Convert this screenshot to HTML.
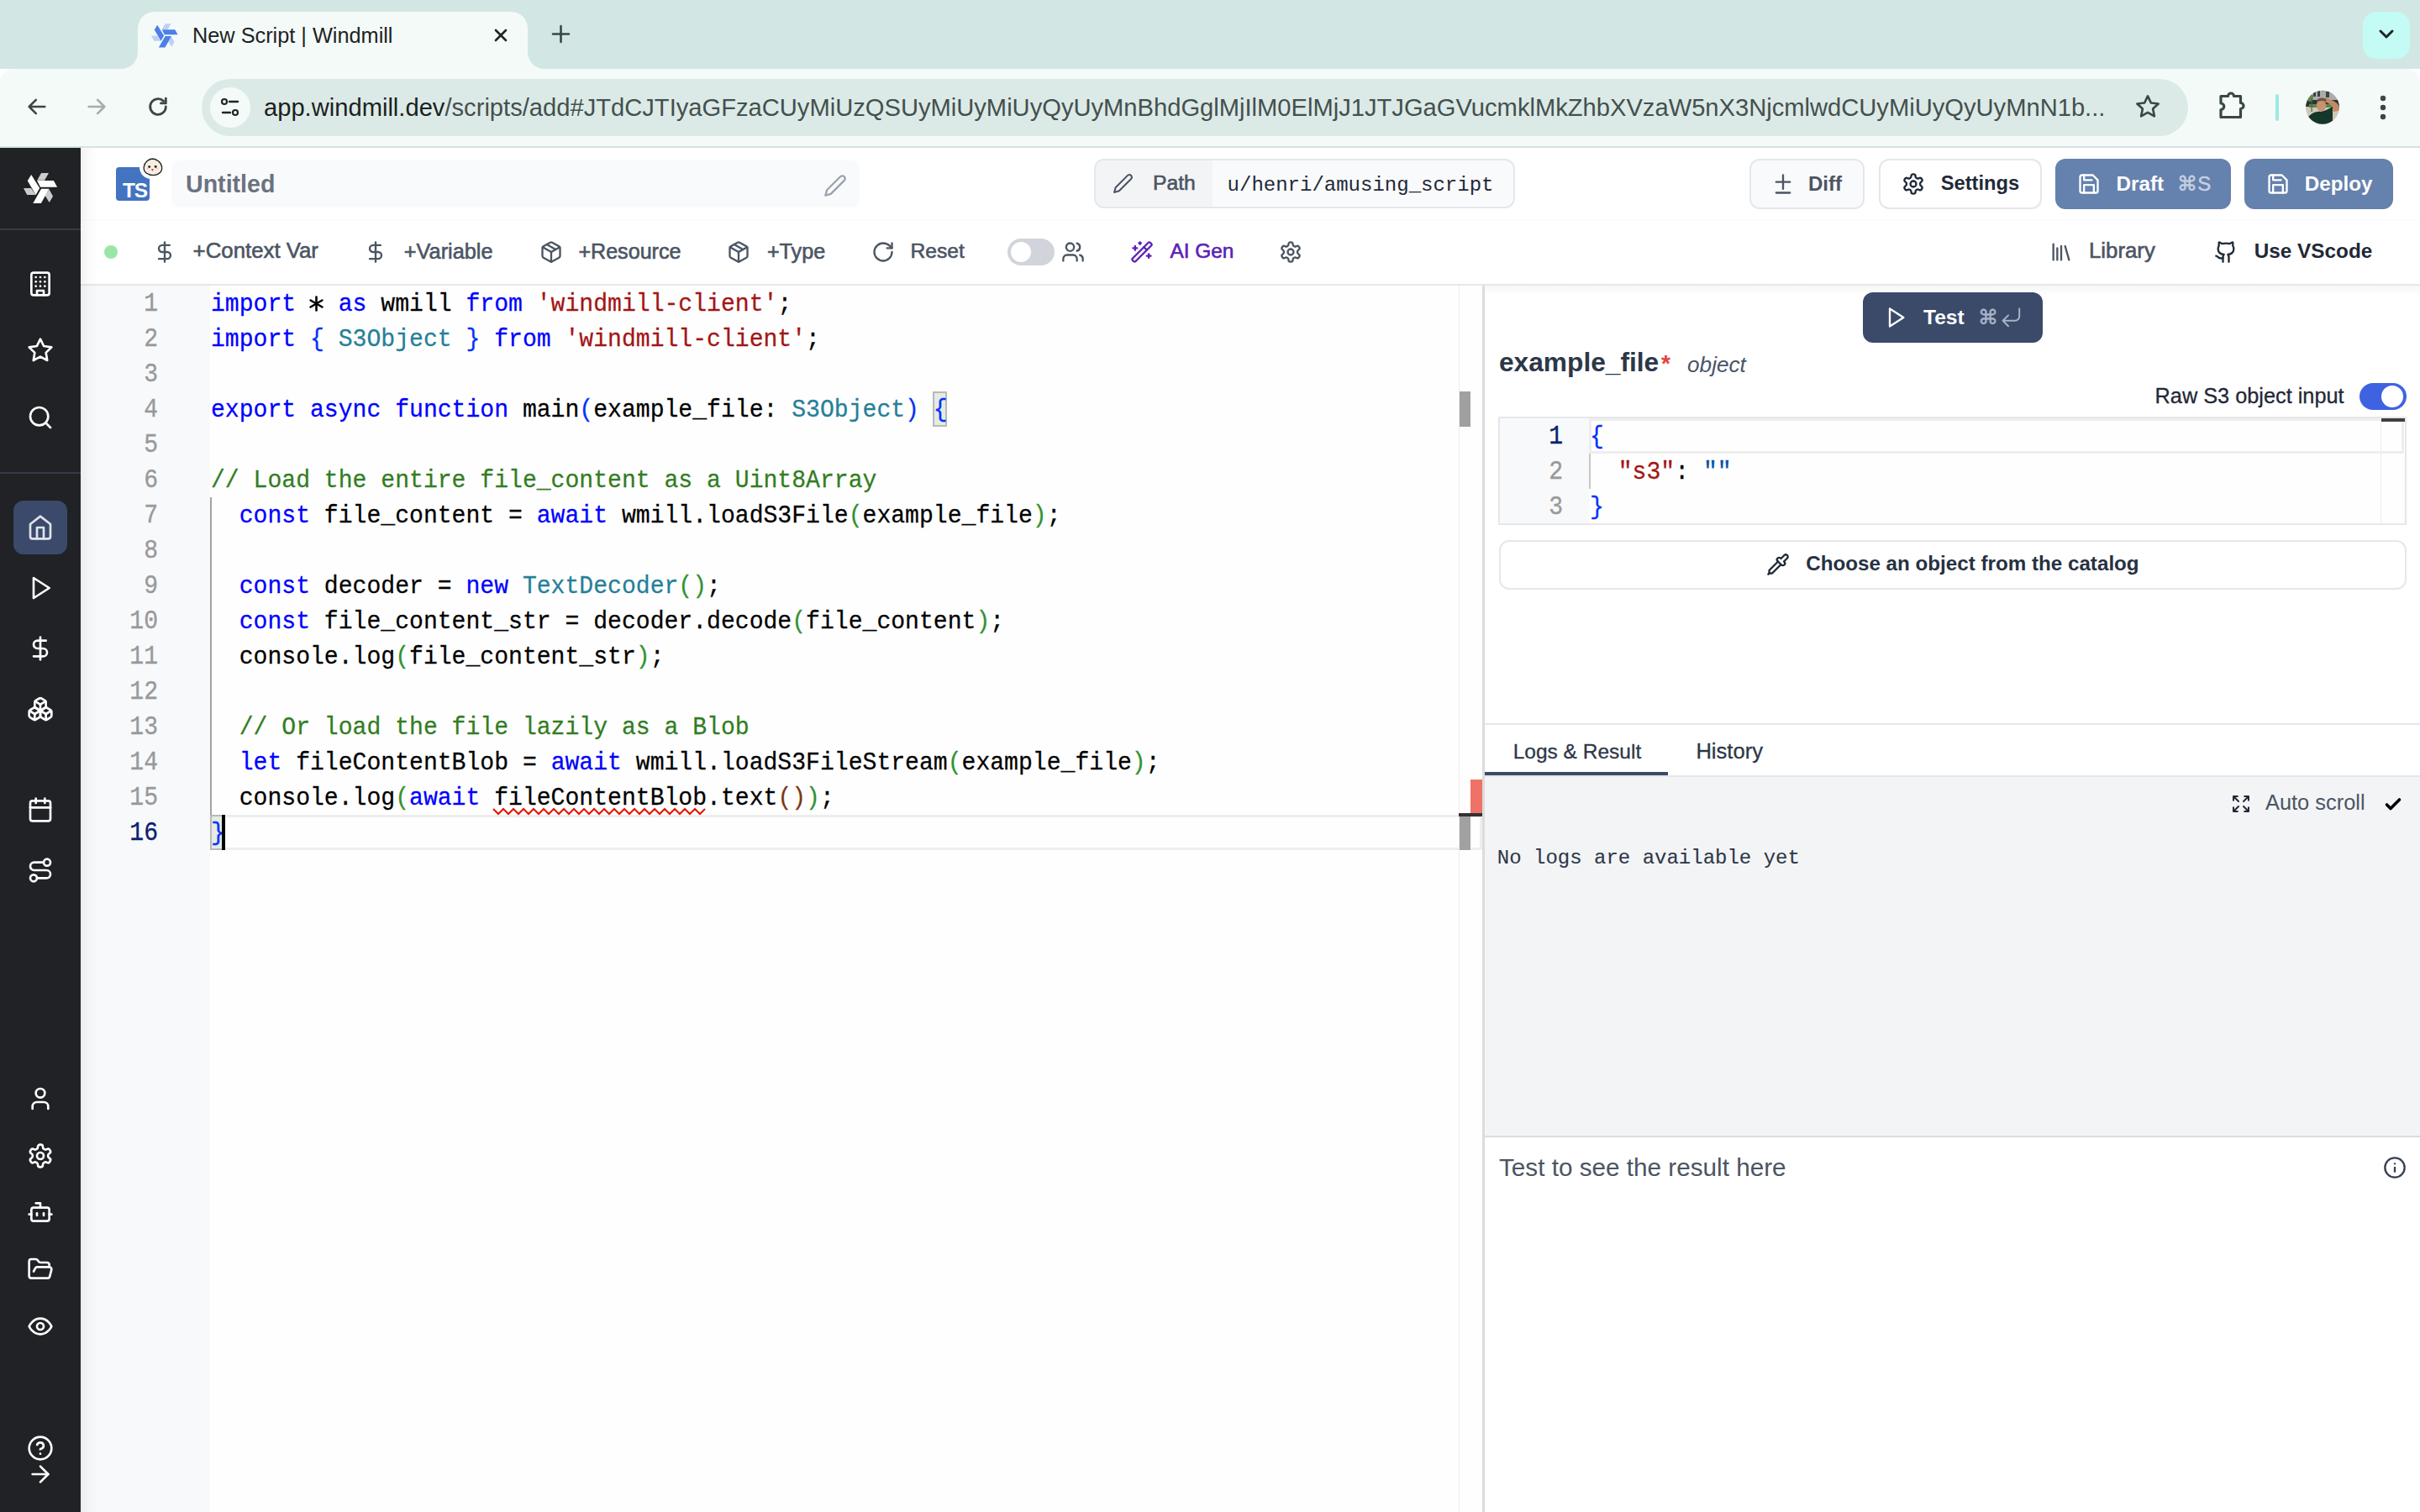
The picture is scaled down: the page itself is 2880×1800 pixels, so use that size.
<!DOCTYPE html>
<html><head><meta charset="utf-8">
<style>
*{box-sizing:border-box;margin:0;padding:0}
html,body{width:2880px;height:1800px;overflow:hidden;background:#fff;font-family:"Liberation Sans",sans-serif}
.a{position:absolute}
svg{display:block;overflow:visible}
.ic{fill:none;stroke:currentColor;stroke-width:2;stroke-linecap:round;stroke-linejoin:round}
.mono{font-family:"Liberation Mono",monospace}
.t{white-space:pre;line-height:1}
</style></head><body>
<!-- ================= BROWSER CHROME ================= -->
<div class="a" style="left:0;top:0;width:2880px;height:82px;background:#d2e7e4"></div>
<!-- active tab -->
<div class="a" style="left:164px;top:14px;width:464px;height:70px;background:#f4faf8;border-radius:20px 20px 0 0"></div>
<div class="a" style="left:144px;top:62px;width:20px;height:20px;background:#f4faf8"></div>
<div class="a" style="left:124px;top:42px;width:40px;height:40px;background:#d2e7e4;border-radius:0 0 20px 0"></div>
<div class="a" style="left:628px;top:62px;width:20px;height:20px;background:#f4faf8"></div>
<div class="a" style="left:628px;top:42px;width:40px;height:40px;background:#d2e7e4;border-radius:0 0 0 20px"></div>
<svg width="0" height="0" style="position:absolute"><defs>
<g id="wm">
<path d="M21.1 0H30L25 8.7H16.1Z M0 18.1H9L14.4 26.1H4.2Z M30.5 19.3L35 27.8L30.7 35L25.7 27Z" fill="var(--l)"/>
<path d="M9.2 1.9L4.8 9.3L14.6 26.1L19.2 18.1Z M16.1 8.9H35.9L40.1 16.7H20Z M21.1 18.7H30.5L20.9 35.9H11.3Z" fill="var(--d)"/>
</g></defs></svg>
<!-- favicon -->
<svg class="a" style="left:180.2px;top:27.9px;--l:#bfd0f6;--d:#4b7fe9" width="32" height="29" viewBox="0 0 40.6 36.3"><use href="#wm"/></svg>
<div class="a t" style="left:229px;top:30px;font-size:25.3px;color:#1d2322">New Script | Windmill</div>
<svg class="a" style="left:588px;top:34px" width="16" height="16" viewBox="0 0 16 16"><path d="M2 2L14 14M14 2L2 14" stroke="#1f2524" stroke-width="2.6" stroke-linecap="round"/></svg>
<svg class="a" style="left:657px;top:30px" width="21" height="21" viewBox="0 0 21 21"><path d="M10.5 1V20M1 10.5H20" stroke="#3a4745" stroke-width="2.6" stroke-linecap="round"/></svg>
<!-- dropdown -->
<div class="a" style="left:2812px;top:14px;width:56px;height:56px;background:#c4fbf5;border-radius:16px"></div>
<svg class="a" style="left:2831px;top:35px" width="18" height="12" viewBox="0 0 18 12"><path d="M2 2L9 9L16 2" fill="none" stroke="#1f2524" stroke-width="3" stroke-linecap="round" stroke-linejoin="round"/></svg>
<!-- toolbar -->
<div class="a" style="left:0;top:82px;width:2880px;height:93px;background:#f4faf8;border-radius:16px 16px 0 0"></div>
<div class="a" style="left:0;top:174px;width:2880px;height:2px;background:#d8e3e1"></div>
<!-- nav -->
<svg class="a" style="left:30px;top:113px" width="28" height="28" viewBox="0 0 24 24"><path d="M20 12H4M11 5l-7 7 7 7" fill="none" stroke="#3a4745" stroke-width="2.2" stroke-linecap="round" stroke-linejoin="round"/></svg>
<svg class="a" style="left:101px;top:113px" width="28" height="28" viewBox="0 0 24 24"><path d="M4 12H20M13 5l7 7-7 7" fill="none" stroke="#a5acab" stroke-width="2.2" stroke-linecap="round" stroke-linejoin="round"/></svg>
<svg class="a" style="left:174px;top:113px" width="28" height="28" viewBox="0 0 24 24"><path d="M20 12a8 8 0 1 1-2.4-5.7" fill="none" stroke="#3a4745" stroke-width="2.4" stroke-linecap="round"/><path d="M20 3.5V8.5H15" fill="none" stroke="#3a4745" stroke-width="2.4" stroke-linecap="round" stroke-linejoin="round"/></svg>
<!-- address bar -->
<div class="a" style="left:240px;top:94px;width:2364px;height:68px;background:#dceae7;border-radius:34px"></div>
<div class="a" style="left:250px;top:104px;width:48px;height:48px;background:#f4faf8;border-radius:24px"></div>
<svg class="a" style="left:262px;top:116px" width="24" height="24" viewBox="0 0 24 24"><circle cx="5" cy="5" r="3" fill="none" stroke="#1f2524" stroke-width="2.2"/><path d="M11 5H21" stroke="#1f2524" stroke-width="2.4" stroke-linecap="round"/><circle cx="18" cy="18" r="3" fill="none" stroke="#1f2524" stroke-width="2.2"/><path d="M3 18H12" stroke="#1f2524" stroke-width="2.4" stroke-linecap="round"/></svg>
<div class="a t" style="left:314px;top:114px;font-size:29.15px;color:#44504e"><span style="color:#1b2220">app.windmill.dev</span>/scripts/add#JTdCJTIyaGFzaCUyMiUzQSUyMiUyMiUyQyUyMnBhdGglMjIlM0ElMjJ1JTJGaGVucmklMkZhbXVzaW5nX3NjcmlwdCUyMiUyQyUyMnN1b...</div>
<svg class="a" style="left:2540px;top:111px" width="32" height="32" viewBox="0 0 24 24"><polygon points="12 2.5 14.9 8.6 21.5 9.4 16.6 13.9 17.9 20.5 12 17.2 6.1 20.5 7.4 13.9 2.5 9.4 9.1 8.6" fill="none" stroke="#3a4745" stroke-width="2" stroke-linejoin="round"/></svg>
<!-- puzzle -->
<svg class="a" style="left:2638px;top:106px" width="40" height="40" viewBox="0 0 40 40"><path d="M5 8.5H13.5A3.5 3.5 0 0 1 20.5 8.5H28.5V16.5A3.5 3.5 0 0 1 28.5 23.5V33.5H5V24.5A3.7 3.7 0 0 0 5 17Z" fill="none" stroke="#3a4745" stroke-width="3.2" stroke-linejoin="round"/></svg>
<div class="a" style="left:2708px;top:112px;width:4px;height:32px;background:#9ee9e0;border-radius:2px"></div>
<!-- avatar -->
<svg class="a" style="left:2740px;top:103px" width="50" height="50" viewBox="0 0 50 50"><defs><clipPath id="avc"><circle cx="24" cy="24.8" r="20"/></clipPath></defs><g clip-path="url(#avc)">
<rect x="0" y="0" width="50" height="50" fill="#cfc8b8"/>
<rect x="0" y="0" width="50" height="17" fill="#a9aeac"/>
<rect x="13" y="5" width="3" height="7" fill="#3a4448"/><rect x="18" y="5" width="3" height="7" fill="#3a4448"/><rect x="28" y="6" width="4" height="7" fill="#3a4448"/><rect x="24" y="4" width="2" height="3" fill="#b8a040"/>
<rect x="0" y="16" width="50" height="8" fill="#2b3436"/>
<rect x="8" y="21" width="30" height="4" fill="#5d8a45"/>
<ellipse cx="9" cy="13" rx="4" ry="5" fill="#5f8a48"/>
<rect x="10.5" y="14" width="1.2" height="16" fill="#5a5a50"/>
<path d="M24 14C28 13 34 15 40 19C44 22 45 26 43 29L37 30L35 23C32 20 28 18 24 18Z" fill="#c48966"/>
<ellipse cx="22.5" cy="22.5" rx="5.6" ry="7" fill="#c79274"/>
<path d="M17 17C18 13 26 12 29 16L27 18C24 16 20 17 17 19Z" fill="#6c5544"/>
<path d="M7 36C12 31 17 29 22 30C27 29 32 26 36 24L36 46L7 46Z" fill="#15362a"/>
</g></svg>
<svg class="a" style="left:2830px;top:112px" width="12" height="32" viewBox="0 0 12 32"><circle cx="6" cy="5" r="3.2" fill="#3a4745"/><circle cx="6" cy="16" r="3.2" fill="#3a4745"/><circle cx="6" cy="27" r="3.2" fill="#3a4745"/></svg>

<!-- ================= SIDEBAR ================= -->
<div class="a" style="left:0;top:176px;width:96px;height:1624px;background:#202226"></div>
<svg class="a" style="left:28px;top:206px;--l:#cccccc;--d:#ffffff" width="40.6" height="36.3" viewBox="0 0 40.6 36.3"><use href="#wm"/></svg>
<div class="a" style="left:0px;top:272px;width:96px;height:2px;background:#343b48"></div>
<div class="a" style="left:0px;top:562px;width:96px;height:2px;background:#343b48"></div>
<div class="a" style="left:16px;top:596px;width:64px;height:64px;background:#3b4a6b;border-radius:12px"></div>
<svg class="a ic" style="left:32.0px;top:322.0px;color:#ffffff;" width="32" height="32" viewBox="0 0 24 24" stroke-width="2"><rect width="16" height="20" x="4" y="2" rx="2" ry="2"/><path d="M9 22v-4h6v4"/><path d="M8 6h.01"/><path d="M16 6h.01"/><path d="M12 6h.01"/><path d="M12 10h.01"/><path d="M12 14h.01"/><path d="M16 10h.01"/><path d="M16 14h.01"/><path d="M8 10h.01"/><path d="M8 14h.01"/></svg>
<svg class="a ic" style="left:32.0px;top:401.0px;color:#ffffff;" width="32" height="32" viewBox="0 0 24 24" stroke-width="2"><polygon points="12 2 15.09 8.26 22 9.27 17 14.14 18.18 21.02 12 17.77 5.82 21.02 7 14.14 2 9.27 8.91 8.26 12 2"/></svg>
<svg class="a ic" style="left:32.0px;top:481.0px;color:#ffffff;" width="32" height="32" viewBox="0 0 24 24" stroke-width="2"><circle cx="11" cy="11" r="8"/><path d="m21 21-4.3-4.3"/></svg>
<svg class="a ic" style="left:32.0px;top:612.0px;color:#dfe3ea;" width="32" height="32" viewBox="0 0 24 24" stroke-width="2"><path d="m3 9 9-7 9 7v11a2 2 0 0 1-2 2H5a2 2 0 0 1-2-2z"/><polyline points="9 22 9 12 15 12 15 22"/></svg>
<svg class="a ic" style="left:32.0px;top:683.5px;color:#ffffff;" width="32" height="32" viewBox="0 0 24 24" stroke-width="2"><polygon points="6 3 20 12 6 21 6 3"/></svg>
<svg class="a ic" style="left:32.0px;top:755.5px;color:#ffffff;" width="32" height="32" viewBox="0 0 24 24" stroke-width="2"><line x1="12" x2="12" y1="2" y2="22"/><path d="M17 5H9.5a3.5 3.5 0 0 0 0 7h5a3.5 3.5 0 0 1 0 7H6"/></svg>
<svg class="a ic" style="left:32.0px;top:827.7px;color:#ffffff;" width="32" height="32" viewBox="0 0 24 24" stroke-width="2"><path d="M2.97 12.92A2 2 0 0 0 2 14.63v3.24a2 2 0 0 0 .97 1.71l3 1.8a2 2 0 0 0 2.06 0L12 19v-5.5l-5-3-4.03 2.42Z"/><path d="m7 16.5-4.74-2.85"/><path d="m7 16.5 5-3"/><path d="M7 16.5v5.17"/><path d="M12 13.5V19l3.97 2.38a2 2 0 0 0 2.06 0l3-1.8a2 2 0 0 0 .97-1.71v-3.240a2 2 0 0 0-.97-1.71L17 10.5l-5 3Z"/><path d="m17 16.5-5-3"/><path d="m17 16.5 4.74-2.85"/><path d="M17 16.5v5.17"/><path d="M7.97 4.42A2 2 0 0 0 7 6.13v4.37l5 3 5-3V6.13a2 2 0 0 0-.97-1.71l-3-1.8a2 2 0 0 0-2.06 0l-3 1.8Z"/><path d="M12 8 7.26 5.15"/><path d="m12 8 4.74-2.85"/><path d="M12 13.5V8"/></svg>
<svg class="a ic" style="left:32.0px;top:947.5px;color:#ffffff;" width="32" height="32" viewBox="0 0 24 24" stroke-width="2"><rect width="18" height="18" x="3" y="4" rx="2" ry="2"/><line x1="16" x2="16" y1="2" y2="6"/><line x1="8" x2="8" y1="2" y2="6"/><line x1="3" x2="21" y1="10" y2="10"/></svg>
<svg class="a ic" style="left:32.0px;top:1019.5px;color:#ffffff;" width="32" height="32" viewBox="0 0 24 24" stroke-width="2"><circle cx="6" cy="19" r="3"/><path d="M9 19h8.5a3.5 3.5 0 0 0 0-7h-11a3.5 3.5 0 0 1 0-7H15"/><circle cx="18" cy="5" r="3"/></svg>
<svg class="a ic" style="left:32.0px;top:1291.5px;color:#ffffff;" width="32" height="32" viewBox="0 0 24 24" stroke-width="2"><path d="M19 21v-2a4 4 0 0 0-4-4H9a4 4 0 0 0-4 4v2"/><circle cx="12" cy="7" r="4"/></svg>
<svg class="a ic" style="left:32.0px;top:1360.0px;color:#ffffff;" width="32" height="32" viewBox="0 0 24 24" stroke-width="2"><path d="M12.22 2h-.44a2 2 0 0 0-2 2v.18a2 2 0 0 1-1 1.73l-.43.25a2 2 0 0 1-2 0l-.15-.08a2 2 0 0 0-2.73.73l-.22.38a2 2 0 0 0 .73 2.73l.15.1a2 2 0 0 1 1 1.72v.51a2 2 0 0 1-1 1.74l-.15.09a2 2 0 0 0-.73 2.73l.22.38a2 2 0 0 0 2.73.73l.15-.08a2 2 0 0 1 2 0l.43.25a2 2 0 0 1 1 1.73V20a2 2 0 0 0 2 2h.44a2 2 0 0 0 2-2v-.18a2 2 0 0 1 1-1.73l.43-.25a2 2 0 0 1 2 0l.15.08a2 2 0 0 0 2.73-.73l.22-.39a2 2 0 0 0-.73-2.73l-.15-.08a2 2 0 0 1-1-1.74v-.5a2 2 0 0 1 1-1.74l.15-.09a2 2 0 0 0 .73-2.73l-.22-.38a2 2 0 0 0-2.73-.73l-.15.08a2 2 0 0 1-2 0l-.43-.25a2 2 0 0 1-1-1.73V4a2 2 0 0 0-2-2z"/><circle cx="12" cy="12" r="3"/></svg>
<svg class="a ic" style="left:32.0px;top:1427.0px;color:#ffffff;" width="32" height="32" viewBox="0 0 24 24" stroke-width="2"><path d="M12 8V4H8"/><rect width="16" height="12" x="4" y="8" rx="2"/><path d="M2 14h2"/><path d="M20 14h2"/><path d="M15 13v2"/><path d="M9 13v2"/></svg>
<svg class="a ic" style="left:32.0px;top:1495.0px;color:#ffffff;" width="32" height="32" viewBox="0 0 24 24" stroke-width="2"><path d="m6 14 1.5-2.9A2 2 0 0 1 9.24 10H20a2 2 0 0 1 1.94 2.5l-1.54 6a2 2 0 0 1-1.95 1.5H4a2 2 0 0 1-2-2V5a2 2 0 0 1 2-2h3.9a2 2 0 0 1 1.690.9l.81 1.2a2 2 0 0 0 1.67.9H18a2 2 0 0 1 2 2v2"/></svg>
<svg class="a ic" style="left:32.0px;top:1563.0px;color:#ffffff;" width="32" height="32" viewBox="0 0 24 24" stroke-width="2"><path d="M2 12s3-7 10-7 10 7 10 7-3 7-10 7-10-7-10-7Z"/><circle cx="12" cy="12" r="3"/></svg>
<svg class="a ic" style="left:32.0px;top:1707.5px;color:#ffffff;" width="32" height="32" viewBox="0 0 24 24" stroke-width="2"><circle cx="12" cy="12" r="10"/><path d="M9.09 9a3 3 0 0 1 5.83 1c0 2-3 3-3 3"/><path d="M12 17h.01"/></svg>
<svg class="a ic" style="left:32.0px;top:1739.0px;color:#ffffff;" width="32" height="32" viewBox="0 0 24 24" stroke-width="2"><path d="M5 12h14"/><path d="m12 5 7 7-7 7"/></svg>

<!-- ================= APP ================= -->
<div class="a" style="left:96px;top:176px;width:2784px;height:85px;background:#ffffff"></div>
<div class="a" style="left:96px;top:261px;width:2784px;height:1px;background:#f9fafa"></div>
<div class="a" style="left:138px;top:199px;width:40px;height:40px;background:#4274c1;border-radius:4px"></div>
<div class="a t" style="left:146px;top:214.68px;font-size:24.5px;color:#ffffff;font-weight:bold;letter-spacing:-1.2px">TS</div>
<div class="a" style="left:166px;top:185px;width:28px;height:28px;border-radius:50%;background:#ffffff"></div>
<svg class="a" style="left:166px;top:184px" width="32" height="30" viewBox="166 184 32 30"><path d="M181.4 189C186 189.2 191.8 193 192.6 198.6C193.4 204.5 188.6 208.6 182.4 208.6C175.8 208.6 170.6 205 171.2 199C171.8 193.2 177.2 189 181.4 189Z" fill="#f6eee0" stroke="#222" stroke-width="1.3"/><ellipse cx="177.7" cy="198.6" rx="1.5" ry="1.4" fill="#222"/><ellipse cx="185.2" cy="198.4" rx="1.5" ry="1.4" fill="#222"/><ellipse cx="176" cy="200.6" rx="1.6" ry="0.9" fill="#f6c4cf"/><ellipse cx="186.8" cy="200.6" rx="1.6" ry="0.9" fill="#f6c4cf"/><path d="M179.8 201.2H183.1L181.4 203.8Z" fill="#c8333a"/></svg>
<div class="a" style="left:204px;top:191px;width:819px;height:56px;background:#f9fafb;border-radius:10px"></div>
<div class="a t" style="left:221px;top:204.69px;font-size:28.6px;color:#6b7280;font-weight:bold;">Untitled</div>
<svg class="a ic" style="left:980.0px;top:206.7px;color:#9ca3af;" width="28" height="28" viewBox="0 0 24 24" stroke-width="1.6"><path d="M17 3a2.85 2.83 0 1 1 4 4L7.5 20.5 2 22l1.5-5.5Z"/></svg>
<div class="a" style="left:1302px;top:189px;width:501px;height:59px;background:#f9fafb;border:2px solid #e5e7eb;border-radius:12px"></div>
<div class="a" style="left:1304px;top:191px;width:139px;height:55px;background:#f3f4f6;border-radius:10px 0 0 10px"></div>
<svg class="a ic" style="left:1323.5px;top:206.0px;color:#4b5563;" width="25" height="25" viewBox="0 0 24 24" stroke-width="1.8"><path d="M17 3a2.85 2.83 0 1 1 4 4L7.5 20.5 2 22l1.5-5.5Z"/></svg>
<div class="a t" style="left:1372px;top:206.0px;font-size:24.7px;color:#4b5563;font-weight:normal;;-webkit-text-stroke:0.6px #4b5563">Path</div>
<div class="a t" style="left:1460.6px;top:208.76px;font-size:24px;color:#1f2937;font-weight:normal;font-family:'Liberation Mono',monospace;">u/henri/amusing_script</div>
<div class="a" style="left:2082px;top:189px;width:137px;height:60px;background:#f9fafb;border:2px solid #e5e7eb;border-radius:12px"></div>
<svg class="a ic" style="left:2107.5px;top:204.5px;color:#4b5563;" width="28" height="28" viewBox="0 0 24 24" stroke-width="2"><path d="M12 3v14"/><path d="M5 10h14"/><path d="M5 21h14"/></svg>
<div class="a t" style="left:2152px;top:207.1px;font-size:24px;color:#4b5563;font-weight:bold;">Diff</div>
<div class="a" style="left:2235.5px;top:189px;width:194px;height:60px;background:#ffffff;border:2px solid #e5e7eb;border-radius:12px"></div>
<svg class="a ic" style="left:2263.0px;top:204.5px;color:#1f2937;" width="28" height="28" viewBox="0 0 24 24" stroke-width="2"><path d="M12.22 2h-.44a2 2 0 0 0-2 2v.18a2 2 0 0 1-1 1.73l-.43.25a2 2 0 0 1-2 0l-.15-.08a2 2 0 0 0-2.73.73l-.22.38a2 2 0 0 0 .73 2.73l.15.1a2 2 0 0 1 1 1.72v.51a2 2 0 0 1-1 1.74l-.15.09a2 2 0 0 0-.73 2.73l.22.38a2 2 0 0 0 2.73.73l.15-.08a2 2 0 0 1 2 0l.43.25a2 2 0 0 1 1 1.73V20a2 2 0 0 0 2 2h.44a2 2 0 0 0 2-2v-.18a2 2 0 0 1 1-1.73l.43-.25a2 2 0 0 1 2 0l.15.08a2 2 0 0 0 2.73-.73l.22-.39a2 2 0 0 0-.73-2.73l-.15-.08a2 2 0 0 1-1-1.74v-.5a2 2 0 0 1 1-1.74l.15-.09a2 2 0 0 0 .73-2.73l-.22-.38a2 2 0 0 0-2.73-.73l-.15.08a2 2 0 0 1-2 0l-.43-.25a2 2 0 0 1-1-1.73V4a2 2 0 0 0-2-2z"/><circle cx="12" cy="12" r="3"/></svg>
<div class="a t" style="left:2309.7px;top:207.35px;font-size:23.7px;color:#1f2937;font-weight:bold;">Settings</div>
<div class="a" style="left:2446px;top:189px;width:209px;height:60px;background:#6581ad;border-radius:12px"></div>
<svg class="a ic" style="left:2472.0px;top:204.5px;color:#ffffff;" width="28" height="28" viewBox="0 0 24 24" stroke-width="2"><path d="M19 21H5a2 2 0 0 1-2-2V5a2 2 0 0 1 2-2h11l5 5v11a2 2 0 0 1-2 2z"/><polyline points="17 21 17 13 7 13 7 21"/><polyline points="7 3 7 8 15 8"/></svg>
<div class="a t" style="left:2518.5px;top:206.84px;font-size:24.3px;color:#ffffff;font-weight:bold;">Draft</div>
<div class="a t" style="left:2591.2px;top:207.1px;font-size:24px;color:#c5cfe2;font-weight:normal;;-webkit-text-stroke:0.5px #c5cfe2">&#8984;S</div>
<div class="a" style="left:2671px;top:189px;width:177px;height:60px;background:#6581ad;border-radius:12px"></div>
<svg class="a ic" style="left:2697.0px;top:204.5px;color:#ffffff;" width="28" height="28" viewBox="0 0 24 24" stroke-width="2"><path d="M19 21H5a2 2 0 0 1-2-2V5a2 2 0 0 1 2-2h11l5 5v11a2 2 0 0 1-2 2z"/><polyline points="17 21 17 13 7 13 7 21"/><polyline points="7 3 7 8 15 8"/></svg>
<div class="a t" style="left:2742.8px;top:206.93px;font-size:24.2px;color:#ffffff;font-weight:bold;">Deploy</div>
<div class="a" style="left:124px;top:292px;width:16px;height:16px;background:#9ae6a9;border-radius:50%"></div>
<svg class="a ic" style="left:181.7px;top:285.7px;color:#4b5563;" width="28" height="28" viewBox="0 0 24 24" stroke-width="2"><line x1="12" x2="12" y1="2" y2="22"/><path d="M17 5H9.5a3.5 3.5 0 0 0 0 7h5a3.5 3.5 0 0 1 0 7H6"/></svg>
<div class="a t" style="left:229.6px;top:286.07px;font-size:25.8px;color:#4b5563;font-weight:normal;;-webkit-text-stroke:0.6px #4b5563">+Context Var</div>
<svg class="a ic" style="left:433.0px;top:285.7px;color:#4b5563;" width="28" height="28" viewBox="0 0 24 24" stroke-width="2"><line x1="12" x2="12" y1="2" y2="22"/><path d="M17 5H9.5a3.5 3.5 0 0 0 0 7h5a3.5 3.5 0 0 1 0 7H6"/></svg>
<div class="a t" style="left:480.8px;top:286.5px;font-size:25.3px;color:#4b5563;font-weight:normal;;-webkit-text-stroke:0.6px #4b5563">+Variable</div>
<svg class="a ic" style="left:641.6px;top:285.7px;color:#4b5563;" width="28" height="28" viewBox="0 0 24 24" stroke-width="2"><path d="m7.5 4.27 9 5.15"/><path d="M21 8a2 2 0 0 0-1-1.73l-7-4a2 2 0 0 0-2 0l-7 4A2 2 0 0 0 3 8v8a2 2 0 0 0 1 1.73l7 4a2 2 0 0 0 2 0l7-4A2 2 0 0 0 21 16Z"/><path d="m3.3 7 8.7 5 8.7-5"/><path d="M12 22V12"/></svg>
<div class="a t" style="left:688.4px;top:286.67px;font-size:25.1px;color:#4b5563;font-weight:normal;;-webkit-text-stroke:0.6px #4b5563">+Resource</div>
<svg class="a ic" style="left:864.8px;top:285.7px;color:#4b5563;" width="28" height="28" viewBox="0 0 24 24" stroke-width="2"><path d="m7.5 4.27 9 5.15"/><path d="M21 8a2 2 0 0 0-1-1.73l-7-4a2 2 0 0 0-2 0l-7 4A2 2 0 0 0 3 8v8a2 2 0 0 0 1 1.73l7 4a2 2 0 0 0 2 0l7-4A2 2 0 0 0 21 16Z"/><path d="m3.3 7 8.7 5 8.7-5"/><path d="M12 22V12"/></svg>
<div class="a t" style="left:912.9px;top:286.58px;font-size:25.2px;color:#4b5563;font-weight:normal;;-webkit-text-stroke:0.6px #4b5563">+Type</div>
<svg class="a ic" style="left:1037.4px;top:285.7px;color:#4b5563;" width="28" height="28" viewBox="0 0 24 24" stroke-width="2"><path d="M21 12a9 9 0 1 1-9-9c2.52 0 4.93 1 6.74 2.74L21 8"/><path d="M21 3v5h-5"/></svg>
<div class="a t" style="left:1083.5px;top:287.09px;font-size:24.6px;color:#4b5563;font-weight:normal;;-webkit-text-stroke:0.6px #4b5563">Reset</div>
<div class="a" style="left:1199px;top:284px;width:56px;height:32px;background:#d1d5db;border-radius:16px"></div>
<div class="a" style="left:1203px;top:288px;width:24px;height:24px;background:#ffffff;border-radius:50%"></div>
<svg class="a ic" style="left:1263.0px;top:285.7px;color:#4b5563;" width="28" height="28" viewBox="0 0 24 24" stroke-width="2"><path d="M16 21v-2a4 4 0 0 0-4-4H6a4 4 0 0 0-4 4v2"/><circle cx="9" cy="7" r="4"/><path d="M22 21v-2a4 4 0 0 0-3-3.87"/><path d="M16 3.13a4 4 0 0 1 0 7.75"/></svg>
<svg class="a ic" style="left:1345.0px;top:285.7px;color:#5b21b6;" width="28" height="28" viewBox="0 0 24 24" stroke-width="2"><path d="m21.64 3.64-1.28-1.28a1.21 1.21 0 0 0-1.72 0L2.36 18.64a1.21 1.21 0 0 0 0 1.72l1.28 1.28a1.2 1.2 0 0 0 1.72 0L21.64 5.36a1.2 1.2 0 0 0 0-1.72Z"/><path d="m14 7 3 3"/><path d="M5 6v4"/><path d="M19 14v4"/><path d="M10 2v2"/><path d="M7 8H3"/><path d="M21 16h-4"/><path d="M11 3H9"/></svg>
<div class="a t" style="left:1392.4px;top:287.26px;font-size:24.4px;color:#5b21b6;font-weight:normal;;-webkit-text-stroke:0.6px #5b21b6">AI Gen</div>
<svg class="a ic" style="left:1521.7px;top:285.7px;color:#4b5563;" width="28" height="28" viewBox="0 0 24 24" stroke-width="2"><path d="M12.22 2h-.44a2 2 0 0 0-2 2v.18a2 2 0 0 1-1 1.73l-.43.25a2 2 0 0 1-2 0l-.15-.08a2 2 0 0 0-2.73.73l-.22.38a2 2 0 0 0 .73 2.73l.15.1a2 2 0 0 1 1 1.72v.51a2 2 0 0 1-1 1.74l-.15.09a2 2 0 0 0-.73 2.73l.22.38a2 2 0 0 0 2.73.73l.15-.08a2 2 0 0 1 2 0l.43.25a2 2 0 0 1 1 1.73V20a2 2 0 0 0 2 2h.44a2 2 0 0 0 2-2v-.18a2 2 0 0 1 1-1.73l.43-.25a2 2 0 0 1 2 0l.15.08a2 2 0 0 0 2.73-.73l.22-.39a2 2 0 0 0-.73-2.73l-.15-.08a2 2 0 0 1-1-1.74v-.5a2 2 0 0 1 1-1.74l.15-.09a2 2 0 0 0 .73-2.73l-.22-.38a2 2 0 0 0-2.73-.73l-.15.08a2 2 0 0 1-2 0l-.43-.25a2 2 0 0 1-1-1.73V4a2 2 0 0 0-2-2z"/><circle cx="12" cy="12" r="3"/></svg>
<svg class="a ic" style="left:2438.6px;top:286.0px;color:#4b5563;" width="28" height="28" viewBox="0 0 24 24" stroke-width="2"><path d="m16 6 4 14"/><path d="M12 6v14"/><path d="M8 8v12"/><path d="M4 4v16"/></svg>
<div class="a t" style="left:2486px;top:286.07px;font-size:25.8px;color:#4b5563;font-weight:normal;;-webkit-text-stroke:0.6px #4b5563">Library</div>
<svg class="a ic" style="left:2635.0px;top:286.0px;color:#1f2937;" width="28" height="28" viewBox="0 0 24 24" stroke-width="2"><path d="M15 22v-4a4.8 4.8 0 0 0-1-3.5c3 0 6-2 6-5.5.08-1.25-.27-2.48-1-3.5.28-1.15.28-2.35 0-3.5 0 0-1 0-3 1.5-2.64-.5-5.36-.5-8 0C6 2 5 2 5 2c-.3 1.15-.3 2.350 0 3.5A5.403 5.403 0 0 0 4 9c0 3.5 3 5.5 6 5.5-.39.49-.68 1.05-.85 1.650-.17.6-.22 1.23-.15 1.85v4"/><path d="M9 18c-4.51 2-5-2-7-2"/></svg>
<div class="a t" style="left:2682.8px;top:287.35px;font-size:24.3px;color:#1f2937;font-weight:bold;">Use VScode</div>
<div class="a" style="left:96px;top:338px;width:2784px;height:2px;background:#e5e7eb"></div>
<div class="a" style="left:96px;top:340px;width:154px;height:1460px;background:#f8f9fb"></div>
<div class="a" style="left:250px;top:340px;width:1486px;height:1460px;background:#fefefe"></div>
<div class="a" style="left:96px;top:176px;width:22px;height:1624px;background:linear-gradient(90deg,rgba(0,0,0,0.055),rgba(0,0,0,0.02) 40%,rgba(0,0,0,0))"></div>
<div class="a" style="left:1736px;top:340px;width:1px;height:1460px;background:#ececec"></div>
<div class="a" style="left:1737px;top:340px;width:27px;height:1460px;background:#fefefe"></div>
<div class="a" style="left:1764px;top:340px;width:3px;height:1460px;background:#dcdcdc"></div>
<div class="a" style="left:250px;top:970px;width:1514px;height:42px;border:3px solid #eeeeee"></div>
<div class="a" style="left:1109.9889790000002px;top:466px;width:16.862529000000002px;height:42px;background:#e4ebe4;border:2px solid #b9b9b9"></div>
<div class="a" style="left:250px;top:970px;width:16.862529000000002px;height:42px;background:#e4ebe4;border:2px solid #b9b9b9"></div>
<div class="a" style="left:250px;top:592px;width:2px;height:378px;background:#a3a3a3"></div>
<div class="a t mono" style="left:97px;top:340px;width:91px;height:42px;line-height:42px;text-align:right;font-size:28.1px;color:#999999;transform-origin:0 28px;transform:translateY(1.6px) scaleY(1.13);-webkit-text-stroke:0.3px #999999">1</div>
<div class="a t mono" style="left:251px;top:340px;height:42px;line-height:42px;font-size:28.1px;color:#000;transform-origin:0 28px;transform:translateY(1.6px) scaleY(1.06);-webkit-text-stroke:0.25px"><span style="color:#0000ff;-webkit-text-stroke-color:#0000ff">import</span><span style="color:#000000;-webkit-text-stroke-color:#000000">   </span><span style="color:#0000ff;-webkit-text-stroke-color:#0000ff">as</span><span style="color:#000000;-webkit-text-stroke-color:#000000"> wmill </span><span style="color:#0000ff;-webkit-text-stroke-color:#0000ff">from</span><span style="color:#000000;-webkit-text-stroke-color:#000000"> </span><span style="color:#a31515;-webkit-text-stroke-color:#a31515">&#x27;windmill-client&#x27;</span><span style="color:#000000;-webkit-text-stroke-color:#000000">;</span></div>
<div class="a t mono" style="left:97px;top:382px;width:91px;height:42px;line-height:42px;text-align:right;font-size:28.1px;color:#999999;transform-origin:0 28px;transform:translateY(1.6px) scaleY(1.13);-webkit-text-stroke:0.3px #999999">2</div>
<div class="a t mono" style="left:251px;top:382px;height:42px;line-height:42px;font-size:28.1px;color:#000;transform-origin:0 28px;transform:translateY(1.6px) scaleY(1.06);-webkit-text-stroke:0.25px"><span style="color:#0000ff;-webkit-text-stroke-color:#0000ff">import</span><span style="color:#000000;-webkit-text-stroke-color:#000000"> </span><span style="color:#0431fa;-webkit-text-stroke-color:#0431fa">{</span><span style="color:#000000;-webkit-text-stroke-color:#000000"> </span><span style="color:#267f99;-webkit-text-stroke-color:#267f99">S3Object</span><span style="color:#000000;-webkit-text-stroke-color:#000000"> </span><span style="color:#0431fa;-webkit-text-stroke-color:#0431fa">}</span><span style="color:#000000;-webkit-text-stroke-color:#000000"> </span><span style="color:#0000ff;-webkit-text-stroke-color:#0000ff">from</span><span style="color:#000000;-webkit-text-stroke-color:#000000"> </span><span style="color:#a31515;-webkit-text-stroke-color:#a31515">&#x27;windmill-client&#x27;</span><span style="color:#000000;-webkit-text-stroke-color:#000000">;</span></div>
<div class="a t mono" style="left:97px;top:424px;width:91px;height:42px;line-height:42px;text-align:right;font-size:28.1px;color:#999999;transform-origin:0 28px;transform:translateY(1.6px) scaleY(1.13);-webkit-text-stroke:0.3px #999999">3</div>
<div class="a t mono" style="left:97px;top:466px;width:91px;height:42px;line-height:42px;text-align:right;font-size:28.1px;color:#999999;transform-origin:0 28px;transform:translateY(1.6px) scaleY(1.13);-webkit-text-stroke:0.3px #999999">4</div>
<div class="a t mono" style="left:251px;top:466px;height:42px;line-height:42px;font-size:28.1px;color:#000;transform-origin:0 28px;transform:translateY(1.6px) scaleY(1.06);-webkit-text-stroke:0.25px"><span style="color:#0000ff;-webkit-text-stroke-color:#0000ff">export</span><span style="color:#000000;-webkit-text-stroke-color:#000000"> </span><span style="color:#0000ff;-webkit-text-stroke-color:#0000ff">async</span><span style="color:#000000;-webkit-text-stroke-color:#000000"> </span><span style="color:#0000ff;-webkit-text-stroke-color:#0000ff">function</span><span style="color:#000000;-webkit-text-stroke-color:#000000"> main</span><span style="color:#0431fa;-webkit-text-stroke-color:#0431fa">(</span><span style="color:#000000;-webkit-text-stroke-color:#000000">example_file: </span><span style="color:#267f99;-webkit-text-stroke-color:#267f99">S3Object</span><span style="color:#0431fa;-webkit-text-stroke-color:#0431fa">)</span><span style="color:#000000;-webkit-text-stroke-color:#000000"> </span><span style="color:#0431fa;-webkit-text-stroke-color:#0431fa">{</span></div>
<div class="a t mono" style="left:97px;top:508px;width:91px;height:42px;line-height:42px;text-align:right;font-size:28.1px;color:#999999;transform-origin:0 28px;transform:translateY(1.6px) scaleY(1.13);-webkit-text-stroke:0.3px #999999">5</div>
<div class="a t mono" style="left:97px;top:550px;width:91px;height:42px;line-height:42px;text-align:right;font-size:28.1px;color:#999999;transform-origin:0 28px;transform:translateY(1.6px) scaleY(1.13);-webkit-text-stroke:0.3px #999999">6</div>
<div class="a t mono" style="left:251px;top:550px;height:42px;line-height:42px;font-size:28.1px;color:#000;transform-origin:0 28px;transform:translateY(1.6px) scaleY(1.06);-webkit-text-stroke:0.25px"><span style="color:#327d22;-webkit-text-stroke-color:#327d22">// Load the entire file_content as a Uint8Array</span></div>
<div class="a t mono" style="left:97px;top:592px;width:91px;height:42px;line-height:42px;text-align:right;font-size:28.1px;color:#999999;transform-origin:0 28px;transform:translateY(1.6px) scaleY(1.13);-webkit-text-stroke:0.3px #999999">7</div>
<div class="a t mono" style="left:251px;top:592px;height:42px;line-height:42px;font-size:28.1px;color:#000;transform-origin:0 28px;transform:translateY(1.6px) scaleY(1.06);-webkit-text-stroke:0.25px"><span style="color:#000000;-webkit-text-stroke-color:#000000">  </span><span style="color:#0000ff;-webkit-text-stroke-color:#0000ff">const</span><span style="color:#000000;-webkit-text-stroke-color:#000000"> file_content = </span><span style="color:#0000ff;-webkit-text-stroke-color:#0000ff">await</span><span style="color:#000000;-webkit-text-stroke-color:#000000"> wmill.loadS3File</span><span style="color:#319331;-webkit-text-stroke-color:#319331">(</span><span style="color:#000000;-webkit-text-stroke-color:#000000">example_file</span><span style="color:#319331;-webkit-text-stroke-color:#319331">)</span><span style="color:#000000;-webkit-text-stroke-color:#000000">;</span></div>
<div class="a t mono" style="left:97px;top:634px;width:91px;height:42px;line-height:42px;text-align:right;font-size:28.1px;color:#999999;transform-origin:0 28px;transform:translateY(1.6px) scaleY(1.13);-webkit-text-stroke:0.3px #999999">8</div>
<div class="a t mono" style="left:97px;top:676px;width:91px;height:42px;line-height:42px;text-align:right;font-size:28.1px;color:#999999;transform-origin:0 28px;transform:translateY(1.6px) scaleY(1.13);-webkit-text-stroke:0.3px #999999">9</div>
<div class="a t mono" style="left:251px;top:676px;height:42px;line-height:42px;font-size:28.1px;color:#000;transform-origin:0 28px;transform:translateY(1.6px) scaleY(1.06);-webkit-text-stroke:0.25px"><span style="color:#000000;-webkit-text-stroke-color:#000000">  </span><span style="color:#0000ff;-webkit-text-stroke-color:#0000ff">const</span><span style="color:#000000;-webkit-text-stroke-color:#000000"> decoder = </span><span style="color:#0000ff;-webkit-text-stroke-color:#0000ff">new</span><span style="color:#000000;-webkit-text-stroke-color:#000000"> </span><span style="color:#267f99;-webkit-text-stroke-color:#267f99">TextDecoder</span><span style="color:#319331;-webkit-text-stroke-color:#319331">()</span><span style="color:#000000;-webkit-text-stroke-color:#000000">;</span></div>
<div class="a t mono" style="left:97px;top:718px;width:91px;height:42px;line-height:42px;text-align:right;font-size:28.1px;color:#999999;transform-origin:0 28px;transform:translateY(1.6px) scaleY(1.13);-webkit-text-stroke:0.3px #999999">10</div>
<div class="a t mono" style="left:251px;top:718px;height:42px;line-height:42px;font-size:28.1px;color:#000;transform-origin:0 28px;transform:translateY(1.6px) scaleY(1.06);-webkit-text-stroke:0.25px"><span style="color:#000000;-webkit-text-stroke-color:#000000">  </span><span style="color:#0000ff;-webkit-text-stroke-color:#0000ff">const</span><span style="color:#000000;-webkit-text-stroke-color:#000000"> file_content_str = decoder.decode</span><span style="color:#319331;-webkit-text-stroke-color:#319331">(</span><span style="color:#000000;-webkit-text-stroke-color:#000000">file_content</span><span style="color:#319331;-webkit-text-stroke-color:#319331">)</span><span style="color:#000000;-webkit-text-stroke-color:#000000">;</span></div>
<div class="a t mono" style="left:97px;top:760px;width:91px;height:42px;line-height:42px;text-align:right;font-size:28.1px;color:#999999;transform-origin:0 28px;transform:translateY(1.6px) scaleY(1.13);-webkit-text-stroke:0.3px #999999">11</div>
<div class="a t mono" style="left:251px;top:760px;height:42px;line-height:42px;font-size:28.1px;color:#000;transform-origin:0 28px;transform:translateY(1.6px) scaleY(1.06);-webkit-text-stroke:0.25px"><span style="color:#000000;-webkit-text-stroke-color:#000000">  console.log</span><span style="color:#319331;-webkit-text-stroke-color:#319331">(</span><span style="color:#000000;-webkit-text-stroke-color:#000000">file_content_str</span><span style="color:#319331;-webkit-text-stroke-color:#319331">)</span><span style="color:#000000;-webkit-text-stroke-color:#000000">;</span></div>
<div class="a t mono" style="left:97px;top:802px;width:91px;height:42px;line-height:42px;text-align:right;font-size:28.1px;color:#999999;transform-origin:0 28px;transform:translateY(1.6px) scaleY(1.13);-webkit-text-stroke:0.3px #999999">12</div>
<div class="a t mono" style="left:97px;top:844px;width:91px;height:42px;line-height:42px;text-align:right;font-size:28.1px;color:#999999;transform-origin:0 28px;transform:translateY(1.6px) scaleY(1.13);-webkit-text-stroke:0.3px #999999">13</div>
<div class="a t mono" style="left:251px;top:844px;height:42px;line-height:42px;font-size:28.1px;color:#000;transform-origin:0 28px;transform:translateY(1.6px) scaleY(1.06);-webkit-text-stroke:0.25px"><span style="color:#327d22;-webkit-text-stroke-color:#327d22">  // Or load the file lazily as a Blob</span></div>
<div class="a t mono" style="left:97px;top:886px;width:91px;height:42px;line-height:42px;text-align:right;font-size:28.1px;color:#999999;transform-origin:0 28px;transform:translateY(1.6px) scaleY(1.13);-webkit-text-stroke:0.3px #999999">14</div>
<div class="a t mono" style="left:251px;top:886px;height:42px;line-height:42px;font-size:28.1px;color:#000;transform-origin:0 28px;transform:translateY(1.6px) scaleY(1.06);-webkit-text-stroke:0.25px"><span style="color:#000000;-webkit-text-stroke-color:#000000">  </span><span style="color:#0000ff;-webkit-text-stroke-color:#0000ff">let</span><span style="color:#000000;-webkit-text-stroke-color:#000000"> fileContentBlob = </span><span style="color:#0000ff;-webkit-text-stroke-color:#0000ff">await</span><span style="color:#000000;-webkit-text-stroke-color:#000000"> wmill.loadS3FileStream</span><span style="color:#319331;-webkit-text-stroke-color:#319331">(</span><span style="color:#000000;-webkit-text-stroke-color:#000000">example_file</span><span style="color:#319331;-webkit-text-stroke-color:#319331">)</span><span style="color:#000000;-webkit-text-stroke-color:#000000">;</span></div>
<div class="a t mono" style="left:97px;top:928px;width:91px;height:42px;line-height:42px;text-align:right;font-size:28.1px;color:#999999;transform-origin:0 28px;transform:translateY(1.6px) scaleY(1.13);-webkit-text-stroke:0.3px #999999">15</div>
<div class="a t mono" style="left:251px;top:928px;height:42px;line-height:42px;font-size:28.1px;color:#000;transform-origin:0 28px;transform:translateY(1.6px) scaleY(1.06);-webkit-text-stroke:0.25px"><span style="color:#000000;-webkit-text-stroke-color:#000000">  console.log</span><span style="color:#319331;-webkit-text-stroke-color:#319331">(</span><span style="color:#0000ff;-webkit-text-stroke-color:#0000ff">await</span><span style="color:#000000;-webkit-text-stroke-color:#000000"> fileContentBlob.text</span><span style="color:#7b3814;-webkit-text-stroke-color:#7b3814">()</span><span style="color:#319331;-webkit-text-stroke-color:#319331">)</span><span style="color:#000000;-webkit-text-stroke-color:#000000">;</span></div>
<div class="a t mono" style="left:97px;top:970px;width:91px;height:42px;line-height:42px;text-align:right;font-size:28.1px;color:#0b216f;transform-origin:0 28px;transform:translateY(1.6px) scaleY(1.13);-webkit-text-stroke:0.3px #0b216f">16</div>
<div class="a t mono" style="left:251px;top:970px;height:42px;line-height:42px;font-size:28.1px;color:#000;transform-origin:0 28px;transform:translateY(1.6px) scaleY(1.06);-webkit-text-stroke:0.25px"><span style="color:#0431fa;-webkit-text-stroke-color:#0431fa">}</span></div>
<svg class="a" style="left:366px;top:351px" width="21" height="21" viewBox="-10.5 -10.5 21 21"><g stroke="#000" stroke-width="2.6" stroke-linecap="round"><path d="M0 -8V8"/><path d="M-6.9 -4L6.9 4"/><path d="M-6.9 4L6.9 -4"/></g></svg>
<div class="a" style="left:264px;top:970px;width:4px;height:42px;background:#000"></div>
<svg class="a" style="left:587.3px;top:963px" width="252.9" height="7"><polyline points="0.0,0 6.0,6 12.0,0 18.0,6 24.0,0 30.0,6 36.0,0 42.0,6 48.0,0 54.0,6 60.0,0 66.0,6 72.0,0 78.0,6 84.0,0 90.0,6 96.0,0 102.0,6 108.0,0 114.0,6 120.0,0 126.0,6 132.0,0 138.0,6 144.0,0 150.0,6 156.0,0 162.0,6 168.0,0 174.0,6 180.0,0 186.0,6 192.0,0 198.0,6 204.0,0 210.0,6 216.0,0 222.0,6 228.0,0 234.0,6 240.0,0 246.0,6 252.0,0" fill="none" stroke="#e51400" stroke-width="2"/></svg>
<div class="a" style="left:1737px;top:466px;width:13px;height:42px;background:#a0a0a0"></div>
<div class="a" style="left:1750px;top:928px;width:14px;height:40px;background:#ee7266"></div>
<div class="a" style="left:1736px;top:968px;width:28px;height:4px;background:#333333"></div>
<div class="a" style="left:1737px;top:972px;width:13px;height:40px;background:#a1a1a1"></div>
<div class="a" style="left:1767px;top:340px;width:1113px;height:1460px;background:#ffffff"></div>
<div class="a" style="left:1767px;top:340px;width:1113px;height:12px;background:linear-gradient(rgba(0,0,0,0.035),rgba(0,0,0,0))"></div>
<div class="a" style="left:2217px;top:348px;width:214px;height:59.5px;background:#3b4a69;border-radius:12px"></div>
<svg class="a ic" style="left:2242.4px;top:363.5px;color:#ffffff;" width="28" height="28" viewBox="0 0 24 24" stroke-width="2"><polygon points="6 3 20 12 6 21 6 3"/></svg>
<div class="a t" style="left:2289px;top:365.69px;font-size:24.6px;color:#ffffff;font-weight:bold;">Test</div>
<div class="a t" style="left:2353.8px;top:366.2px;font-size:24px;color:#a9b3c6;font-weight:normal;;-webkit-text-stroke:0.5px #a9b3c6">&#8984;</div>
<svg class="a" style="left:2380px;top:365px" width="26" height="26" viewBox="2380 365 26 26"><path d="M2403.2 367.4V376.6A5.2 5.2 0 0 1 2398 381.8H2383.6M2390 375.4L2383.6 381.8L2390 388.2" fill="none" stroke="#a9b3c6" stroke-width="2" stroke-linecap="round" stroke-linejoin="round"/></svg>
<div class="a t" style="left:1784px;top:415.75px;font-size:31.7px;color:#2d3748;font-weight:bold;">example_file</div>
<div class="a t" style="left:1977px;top:419.2px;font-size:28px;color:#e0443e;font-weight:bold;">*</div>
<div class="a t" style="left:2008px;top:421.23px;font-size:26.2px;color:#4a5568;font-weight:normal;font-style:italic">object</div>
<div class="a t" style="left:2564.6px;top:459.0px;font-size:25.3px;color:#1f2937;font-weight:normal;;-webkit-text-stroke:0.3px #1f2937">Raw S3 object input</div>
<div class="a" style="left:2808px;top:456px;width:56px;height:32px;background:#3f63e0;border-radius:16px"></div>
<div class="a" style="left:2834px;top:459px;width:26px;height:26px;background:#ffffff;border-radius:50%"></div>
<div class="a" style="left:1783px;top:496px;width:1081px;height:129px;background:#fefefe;border:2px solid #e5e7eb"></div>
<div class="a" style="left:1785px;top:498px;width:106px;height:125px;background:#f8f9fb"></div>
<div class="a" style="left:1891px;top:498px;width:970px;height:42px;border:3px solid #eeeeee"></div>
<div class="a" style="left:1891px;top:540px;width:2px;height:42px;background:#c6c6c6"></div>
<div class="a" style="left:2833px;top:498px;width:1px;height:125px;background:#ececec"></div>
<div class="a" style="left:2834px;top:498px;width:28px;height:4px;background:#404040"></div>
<div class="a t mono" style="left:1786px;top:498px;width:74px;height:42px;line-height:42px;text-align:right;font-size:28.1px;color:#0b216f;transform-origin:0 28px;transform:translateY(1.6px) scaleY(1.13);-webkit-text-stroke:0.3px #0b216f">1</div>
<div class="a t mono" style="left:1892px;top:498px;height:42px;line-height:42px;font-size:28.1px;transform-origin:0 28px;transform:translateY(1.6px) scaleY(1.06);-webkit-text-stroke:0.25px"><span style="color:#0431fa;-webkit-text-stroke-color:#0431fa">{</span></div>
<div class="a t mono" style="left:1786px;top:540px;width:74px;height:42px;line-height:42px;text-align:right;font-size:28.1px;color:#999999;transform-origin:0 28px;transform:translateY(1.6px) scaleY(1.13);-webkit-text-stroke:0.3px #999999">2</div>
<div class="a t mono" style="left:1892px;top:540px;height:42px;line-height:42px;font-size:28.1px;transform-origin:0 28px;transform:translateY(1.6px) scaleY(1.06);-webkit-text-stroke:0.25px"><span style="color:#000000;-webkit-text-stroke-color:#000000">  </span><span style="color:#a31515;-webkit-text-stroke-color:#a31515">&quot;s3&quot;</span><span style="color:#000000;-webkit-text-stroke-color:#000000">:</span><span style="color:#000000;-webkit-text-stroke-color:#000000"> </span><span style="color:#0451a5;-webkit-text-stroke-color:#0451a5">&quot;&quot;</span></div>
<div class="a t mono" style="left:1786px;top:582px;width:74px;height:42px;line-height:42px;text-align:right;font-size:28.1px;color:#999999;transform-origin:0 28px;transform:translateY(1.6px) scaleY(1.13);-webkit-text-stroke:0.3px #999999">3</div>
<div class="a t mono" style="left:1892px;top:582px;height:42px;line-height:42px;font-size:28.1px;transform-origin:0 28px;transform:translateY(1.6px) scaleY(1.06);-webkit-text-stroke:0.25px"><span style="color:#0431fa;-webkit-text-stroke-color:#0431fa">}</span></div>
<div class="a" style="left:1784px;top:643px;width:1080px;height:58.5px;background:#ffffff;border:2px solid #e5e7eb;border-radius:12px"></div>
<svg class="a ic" style="left:2102.0px;top:658.0px;color:#1f2937;" width="28" height="28" viewBox="0 0 24 24" stroke-width="2"><path d="m2 22 1-1h3l9-9"/><path d="M3 21v-3l9-9"/><path d="m15 6 3.4-3.4a2.1 2.1 0 1 1 3 3L18 9l.4.4a2.1 2.1 0 1 1-3 3l-3.8-3.8a2.1 2.1 0 1 1 3-3l.4.4Z"/></svg>
<div class="a t" style="left:2149.2px;top:659.43px;font-size:24.2px;color:#273142;font-weight:bold;">Choose an object from the catalog</div>
<div class="a" style="left:1767px;top:861px;width:1113px;height:2px;background:#e5e7eb"></div>
<div class="a t" style="left:1800.7px;top:882.67px;font-size:24.5px;color:#2d3748;font-weight:normal;;-webkit-text-stroke:0.3px #2d3748">Logs &amp; Result</div>
<div class="a t" style="left:2018.4px;top:881.74px;font-size:25.6px;color:#2d3748;font-weight:normal;;-webkit-text-stroke:0.3px #2d3748">History</div>
<div class="a" style="left:1767px;top:919px;width:218px;height:4px;background:#3b4a68"></div>
<div class="a" style="left:1767px;top:923px;width:1113px;height:2px;background:#e5e7eb"></div>
<div class="a" style="left:1767px;top:925px;width:1113px;height:427px;background:#f3f4f6"></div>
<svg class="a ic" style="left:2655.0px;top:945.0px;color:#1f2937;" width="24" height="24" viewBox="0 0 24 24" stroke-width="2.2"><path d="m21 21-6-6m6 6v-4.8m0 4.8h-4.8"/><path d="M3 16.2V21m0 0h4.8M3 21l6-6"/><path d="M21 7.8V3m0 0h-4.8M21 3l-6 6"/><path d="M3 7.8V3m0 0h4.8M3 3l6 6"/></svg>
<div class="a t" style="left:2696px;top:943.41px;font-size:25.4px;color:#4b5563;font-weight:normal;">Auto scroll</div>
<svg class="a" style="left:2838px;top:949px" width="20" height="16" viewBox="0 0 20 16"><path d="M2.5 9L7 13.5L17.5 3" fill="none" stroke="#000" stroke-width="3.6" stroke-linecap="round" stroke-linejoin="round"/></svg>
<div class="a t" style="left:1781.8px;top:1010.16px;font-size:24px;color:#2d3748;font-weight:normal;font-family:'Liberation Mono',monospace;;-webkit-text-stroke:0.1px #2d3748">No logs are available yet</div>
<div class="a" style="left:1767px;top:1352px;width:1113px;height:2px;background:#dcdcdc"></div>
<div class="a t" style="left:1784px;top:1374.76px;font-size:29.7px;color:#4b5563;font-weight:normal;">Test to see the result here</div>
<svg class="a ic" style="left:2836.0px;top:1376.0px;color:#374151;" width="28" height="28" viewBox="0 0 24 24" stroke-width="2"><circle cx="12" cy="12" r="10"/><path d="M12 16v-4"/><path d="M12 8h.01"/></svg>
</body></html>
